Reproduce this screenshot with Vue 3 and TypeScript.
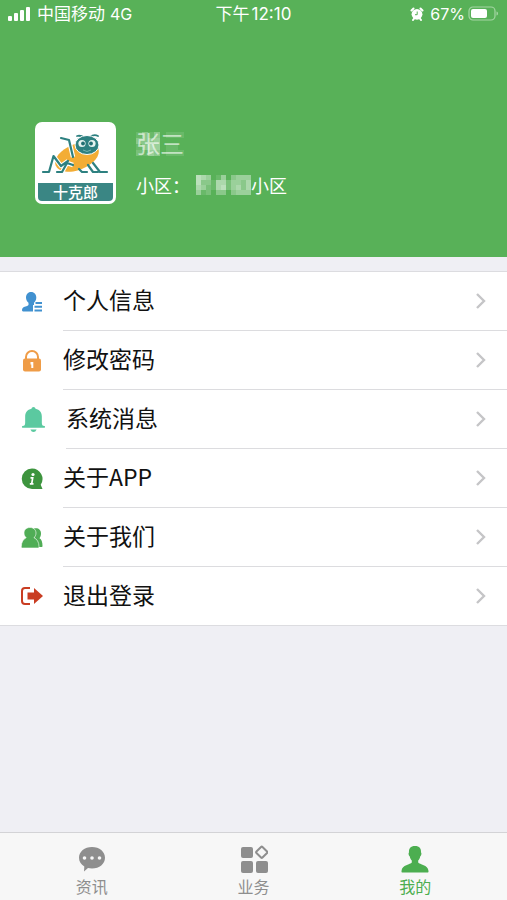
<script setup lang="ts">
import { ref } from 'vue'

type Icon = 'profile' | 'lock' | 'bell' | 'info' | 'people' | 'exit'

interface MenuItem {
  icon: Icon
  label: string
}

interface Block {
  x: number
  y: number
  o: number
}

const menu: MenuItem[] = [
  { icon: 'profile', label: '个人信息' },
  { icon: 'lock', label: '修改密码' },
  { icon: 'bell', label: '系统消息' },
  { icon: 'info', label: '关于APP' },
  { icon: 'people', label: '关于我们' },
  { icon: 'exit', label: '退出登录' },
]

const tabs = ['资讯', '业务', '我的']
const active = ref('我的')

/* Each digit is the opacity, in tenths, of one mosaic cell. */
function toBlocks(rows: string[], size: number): Block[] {
  return rows.flatMap((row, y) =>
    [...row].map((c, x) => ({ x: x * size, y: y * size, o: Number(c) / 10 })),
  )
}

const nameMosaic = toBlocks(['13130111', '33340000', '13540110', '21430111'], 6)
const areaMosaic = toBlocks(['65401403444', '63315524435', '54215624535', '41203303444'], 5)
</script>

<template>
  <div class="page">
    <header class="hero">
      <div class="status">
        <div class="status-side">
          <svg class="signal" viewBox="0 0 23 14" aria-hidden="true">
            <rect x="0" y="9" width="4" height="5" rx="1" />
            <rect x="6" y="6" width="4" height="8" rx="1" />
            <rect x="12" y="3" width="4" height="11" rx="1" />
            <rect x="18" y="0" width="4" height="14" rx="1" />
          </svg>
          <span class="carrier">中国移动</span>
          <span class="network">4G</span>
        </div>
        <div class="status-time"><span>下午</span><span>12:10</span></div>
        <div class="status-side status-end">
          <svg class="alarm" viewBox="0 0 14 14" aria-hidden="true">
            <circle cx="7" cy="7.3" r="5.4" fill="#fff" />
            <path d="M1.500 3.500 3.500 1.500M12.500 3.500 10.500 1.500M3 13l1.500-2M11 13l-1.500-2" stroke="#fff" stroke-width="2" stroke-linecap="round" />
            <path d="M7.200 4.500v3.200H5" fill="none" stroke="#58b158" stroke-width="1" />
          </svg>
          <span class="percent">67%</span>
          <svg class="battery" viewBox="0 0 31 16" aria-hidden="true">
            <rect x="1" y="1" width="26" height="13" rx="4" fill="none" stroke="#a5d6a4" stroke-width="1.2" />
            <rect x="3" y="3" width="16" height="9" rx="2" fill="#fff" />
            <path d="M28.500 5.500c2 .5 2 3.500 0 4z" fill="#a5d6a4" />
          </svg>
        </div>
      </div>

      <div class="user">
        <div class="avatar">
          <svg class="cricket" viewBox="0 0 72 46" aria-hidden="true">
            <ellipse cx="37" cy="25" rx="23" ry="13" transform="rotate(-22 37 25)" fill="#f3ad35" />
            <g fill="none" stroke="#fff" stroke-width="4.500" stroke-linejoin="round">
              <path d="M9 40 13.500 24 21 34 28 29M22 40 27 31 33 33" />
              <path d="M21 6 29 8 33 25" />
            </g>
            <g fill="none" stroke="#2d8080" stroke-width="2.200" stroke-linejoin="round" stroke-linecap="round">
              <path d="M3 40h6l4.500-16 7.500 10 7-5M17 40h5l5-9 6 2" />
              <path d="M21 6l8 2 4 17" />
              <path d="M39 37l3 3h5M48 33l5 7h5M53 31l7 9h7" />
              <path d="M37 4q4-1 8 2M50 5q4-3 8-1" stroke-width="1.800" />
            </g>
            <ellipse cx="47" cy="13" rx="12" ry="9.500" fill="#2d8080" stroke="#fff" stroke-width="1" />
            <circle cx="42" cy="11.500" r="3.600" fill="#e5f3ef" />
            <circle cx="52" cy="11.500" r="3.600" fill="#e5f3ef" />
            <circle cx="43" cy="11.500" r="1.900" fill="#226f72" />
            <circle cx="51" cy="11.500" r="1.900" fill="#226f72" />
            <path d="M43 18q4 3 8 0" fill="none" stroke="#75b4b0" />
          </svg>
          <span class="brand">十克郎</span>
        </div>
        <div class="details">
          <h1 class="name">
            <span>张三</span>
            <svg class="name-mosaic" viewBox="0 0 48 24" shape-rendering="crispEdges" aria-hidden="true">
              <rect v-for="(b, i) in nameMosaic" :key="i" :x="b.x" :y="b.y" width="6" height="6" fill="#fff" :fill-opacity="b.o" />
            </svg>
          </h1>
          <p class="area">
            <span>小区：</span>
            <svg class="area-mosaic" viewBox="0 0 55 20" shape-rendering="crispEdges" aria-hidden="true">
              <rect v-for="(b, i) in areaMosaic" :key="i" :x="b.x" :y="b.y" width="5" height="5" fill="#fff" :fill-opacity="b.o" />
            </svg>
            <span>小区</span>
          </p>
        </div>
      </div>
    </header>

    <main class="content">
      <ul class="menu">
        <li v-for="item in menu" :key="item.icon">
          <button type="button" class="row">
            <svg
              class="row-icon"
              :class="{ wide: item.icon === 'bell' }"
              :viewBox="item.icon === 'bell' ? '0 0 24 24' : '1 1 22 22'"
              aria-hidden="true"
            >
              <g v-if="item.icon === 'profile'" fill="#4191d0">
                <path d="M11 2c3.500 0 5.300 2.500 5.300 5.500 0 2.300-1 4.200-2.300 5.300V15h-1v6.500H3c-1.300 0-1.200-2.500-.3-3.500 1.300-1.500 4.300-1.500 5.800-3v-2.200C7 11.500 6 9.800 6 7.500 6 4.500 7.800 2 11 2z" />
                <path d="M15.500 12H22v2h-6.500zM14.500 15.800H22v2h-7.500zM14.500 19.500H22v2h-7.500z" />
              </g>
              <g v-else-if="item.icon === 'lock'">
                <path d="M6 11V8a6 6 0 0 1 12 0V11" fill="none" stroke="#ef9c47" stroke-width="2" />
                <rect x="3" y="9.500" width="18" height="13" rx="2" fill="#ef9c47" />
                <path d="M10.500 13h2.800v6h-2v-3.500h-.8z" fill="#fff" />
              </g>
              <g v-else-if="item.icon === 'bell'" fill="#5bc9a0">
                <path d="M12 0c1 0 1.800.7 1.900 1.700C18 2.500 20 5.500 20 9v6c0 2 .5 3 2.500 3.300.8.200.8 1.700 0 1.700h-21c-.8 0-.8-1.500 0-1.700C3.500 18 4 17 4 15V9c0-3.500 2-6.500 6.100-7.300C10.200.7 11 0 12 0z" />
                <path d="M9 21.500h6q-1 2.500-3 2.500t-3-2.500z" />
              </g>
              <g v-else-if="item.icon === 'info'">
                <path d="M12 1.500a10.500 10.500 0 0 1 8.700 16.300L22.500 22H12a10.200 10.200 0 1 1 0-20.500z" fill="#3d943e" />
                <circle cx="13" cy="7.500" r="1.600" fill="#fff" />
                <path d="M10.500 10.800h2.200l-1 6M9.800 16.800h3.700" fill="none" stroke="#fff" stroke-width="1.700" />
              </g>
              <g v-else-if="item.icon === 'people'" fill="#50ad56">
                <path d="M14 2.500c4-1 7 1 7 5 0 2-.7 3.500-1.500 4.700 2 1 3 4 3 7.800 0 .6-.3 1-1 1H15z" />
                <path d="M10 1.500c3.500 0 6 2.300 6 5.500 0 2-.8 3.600-2 4.700 3 1.300 5 4.500 5 9 0 .8-.3 1.300-1.200 1.300H2.500c-.8 0-1.200-.5-1.200-1.300 0-4.500 2-7.700 4.900-9C5 10.600 4 9 4 7c0-3.200 2.500-5.500 6-5.500z" stroke="#fff" stroke-width=".6" />
              </g>
              <g v-else>
                <path d="M10 4H5Q2 4 2 7v10q0 3 3 3h5" fill="none" stroke="#c93d22" stroke-width="2" />
                <path d="M7.500 8.500H14V4l9 8-9 8v-4.500H7.500z" fill="#c93d22" />
              </g>
            </svg>
            <span class="row-body">
              <span class="row-label">{{ item.label }}</span>
              <svg class="chevron" viewBox="0 0 12 18" aria-hidden="true">
                <path d="M2 2l7 7-7 7" fill="none" stroke="#c5c5c7" stroke-width="2.400" />
              </svg>
            </span>
          </button>
        </li>
      </ul>
    </main>

    <nav class="tabs">
      <button
        v-for="(tab, i) in tabs"
        :key="tab"
        type="button"
        class="tab"
        :class="{ active: active === tab }"
        @click="active = tab"
      >
        <svg class="tab-icon" viewBox="0 0 28 28" aria-hidden="true">
          <g v-if="i === 0">
            <path d="M14 2c7.500 0 13 4.700 13 10.700s-5.500 10.800-13 10.800c-1.500 0-2.800-.2-4-.5L6 26.500l.3-5C3 19.500 1 16.400 1 12.700 1 6.700 6.500 2 14 2z" fill="currentColor" />
            <g fill="#f7f7f7">
              <circle cx="6.500" cy="13" r="1.800" />
              <circle cx="14" cy="13" r="1.800" />
              <circle cx="21.500" cy="13" r="1.800" />
            </g>
          </g>
          <g v-else-if="i === 1" fill="currentColor">
            <rect x="1" y="2" width="12" height="11" rx="2" />
            <rect x="1" y="16" width="12" height="12" rx="2" />
            <rect x="16" y="16" width="12" height="12" rx="2" />
            <rect x="17.500" y="3" width="8.500" height="8.500" rx="1" transform="rotate(45 21.750 7.250)" fill="none" stroke="currentColor" stroke-width="2" />
          </g>
          <path
            v-else
            d="M14 1c4.500 0 6.300 2.500 6 6.500.8.300.5 3-.8 4-.3 1.800-1 3-2 4v2c1.300 2.200 9.800 2 10.300 8.500.1 1-.2 1.500-1 1.500h-25c-.8 0-1.100-.5-1-1.500.5-6.500 9-6.300 10.300-8.500v-2c-1-1-1.700-2.200-2-4-1.300-1-1.600-3.700-.8-4C7.700 3.500 9.500 1 14 1z"
            fill="currentColor"
          />
        </svg>
        <span>{{ tab }}</span>
      </button>
    </nav>
  </div>
</template>

<style>
body {
  margin: 0;
  background: #efeff4;
}
</style>

<style scoped>
.page {
  display: flex;
  flex-direction: column;
  min-height: 100vh;
  font-family: 'Noto Sans CJK SC', sans-serif;
  color: #111;
}

button {
  margin: 0;
  padding: 0;
  border: 0;
  background: none;
  color: inherit;
  font: inherit;
}

.hero {
  padding-bottom: 53px;
  background: #58b158;
  color: #fff;
}

.status {
  display: grid;
  grid-template-columns: 1fr auto 1fr;
  align-items: center;
  height: 28px;
  padding: 0 8px;
  font-family: Inter, 'Noto Sans CJK SC', sans-serif;
  font-size: 16px;
  line-height: 28px;
}

.status-side {
  display: flex;
  align-items: center;
}

.status-end {
  justify-content: flex-end;
}

.signal {
  width: 23px;
  height: 14px;
  margin-right: 6px;
  fill: #fff;
}

.carrier {
  font-size: 17px;
}

.network {
  margin-left: 5px;
}

.status-time {
  display: flex;
  gap: 2px;
  font-size: 17px;
}

.alarm {
  width: 14px;
  height: 14px;
  margin-right: 6px;
}

.battery {
  width: 31px;
  height: 16px;
  margin-left: 3px;
}

.user {
  display: flex;
  gap: 20px;
  padding: 94px 35px 0;
}

.avatar {
  display: flex;
  flex-direction: column;
  flex: none;
  box-sizing: border-box;
  width: 81px;
  height: 82px;
  padding: 10px 3px 3px;
  border-radius: 7px;
  background: #fff;
}

.cricket {
  width: 72px;
  height: 46px;
  margin: 0 auto;
}

.brand {
  margin-top: auto;
  border-radius: 0 0 4px 4px;
  background: #3a8684;
  font-size: 15px;
  font-weight: 500;
  line-height: 18px;
  text-align: center;
}

.name {
  position: relative;
  width: 48px;
  margin: 7px 0 0;
  color: rgba(255, 255, 255, 0.6);
  font-size: 24px;
  font-weight: 400;
  line-height: 28px;
}

.name-mosaic {
  position: absolute;
  top: 3px;
  left: 0;
  width: 48px;
  height: 24px;
}

.area {
  display: flex;
  align-items: center;
  margin: 14px 0 0;
  font-size: 18px;
  line-height: 28px;
}

.area-mosaic {
  width: 55px;
  height: 20px;
  margin-left: 6px;
}

.content {
  flex: 1;
  padding: 14px 0;
}

.menu {
  margin: 0;
  padding: 0;
  border-top: 1px solid #dcdce0;
  background: #fff;
  list-style: none;
}

.row {
  display: flex;
  align-items: center;
  width: 100%;
  padding-left: 21px;
  text-align: left;
}

.row-icon {
  width: 22px;
  height: 22px;
  margin-right: 20px;
}

.row-icon.wide {
  width: 25px;
  height: 25px;
}

.row-body {
  display: flex;
  flex: 1;
  align-items: center;
  justify-content: space-between;
  padding-right: 20px;
  border-bottom: 1px solid #dcdcdf;
}

.row-label {
  padding-bottom: 4px;
  font-size: 23px;
  line-height: 54px;
}

.menu li:last-child .row {
  border-bottom: 1px solid #dcdce0;
}

.menu li:last-child .row-body {
  border-bottom: 0;
}

.chevron {
  width: 12px;
  height: 18px;
}

.tabs {
  display: flex;
  justify-content: space-between;
  padding: 0 11px;
  border-top: 1px solid #d3d3d6;
  background: #f7f7f7;
}

.tab {
  display: flex;
  flex: 1;
  flex-direction: column;
  gap: 1px;
  align-items: center;
  padding: 12px 0 1px;
  color: #8e8e8e;
  font-size: 16px;
  line-height: 25px;
}

.tab.active {
  color: #4cae50;
}

.tab-icon {
  width: 28px;
  height: 28px;
}
</style>
